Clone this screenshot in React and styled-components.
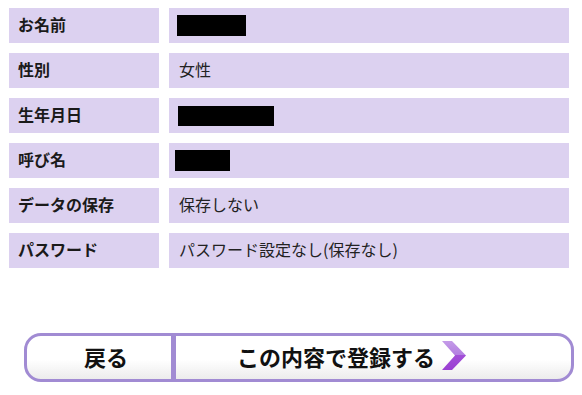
import styled, { createGlobalStyle } from 'styled-components'

const GlobalStyle = createGlobalStyle`
  body {
    margin: 0;
    background: #fff;
    font-family: "Noto Sans CJK JP", "Noto Sans", sans-serif;
    color: #222;
  }
`

const Page = styled.div`
  padding: 8px 9px;
`

const InfoList = styled.dl`
  margin: 0;
  width: 560px;
  display: grid;
  grid-template-columns: 150px 400px;
  column-gap: 10px;
  row-gap: 10px;
`

const Label = styled.dt`
  height: 35px;
  box-sizing: border-box;
  padding: 0 0 3px 9px;
  background: #dcd1f0;
  display: flex;
  align-items: center;
  font-size: 16px;
  font-weight: 700;
  color: #1a1a1a;
`

const Value = styled.dd`
  margin: 0;
  height: 35px;
  box-sizing: border-box;
  padding: 0 0 3px 10px;
  background: #dcd1f0;
  display: flex;
  align-items: center;
  font-size: 16px;
  color: #222;
`

const Masked = styled.span`
  display: block;
  width: ${(p) => p.$w}px;
  height: ${(p) => p.$h}px;
  background: #000;
  margin: ${(p) => p.$y || 0}px 0 0 ${(p) => p.$x || 0}px;
`

const ButtonBar = styled.div`
  margin: 65px 0 0 15px;
  width: 550px;
  height: 49px;
  box-sizing: border-box;
  border: 3px solid #a18bd3;
  border-radius: 17px;
  background: linear-gradient(#fff 0%, #fff 55%, #ececec 100%);
  display: flex;
  overflow: hidden;
`

const BarButton = styled.button`
  border: none;
  background: transparent;
  font-family: inherit;
  font-size: 22px;
  font-weight: 700;
  color: #111;
  display: flex;
  align-items: center;
  gap: 7px;
  padding: 0 0 4px ${(p) => p.$pad}px;
  width: ${(p) => p.$w}px;
  cursor: pointer;
`

const Divider = styled.span`
  width: 5px;
  background: #a18bd3;
`

const rows = [
  { label: 'お名前', mask: { w: 69, h: 21, x: -2, y: 3 } },
  { label: '性別', text: '女性' },
  { label: '生年月日', mask: { w: 96, h: 20, x: -1, y: 3 } },
  { label: '呼び名', mask: { w: 55, h: 21, x: -4, y: 3 } },
  { label: 'データの保存', text: '保存しない' },
  { label: 'パスワード', text: 'パスワード設定なし(保存なし)' },
]

function Chevron() {
  return (
    <svg width='24' height='29' viewBox='0 0 24 29'>
      <defs>
        <linearGradient id='chev' x1='0' y1='0' x2='0' y2='1'>
          <stop offset='0' stopColor='#c49be8' />
          <stop offset='0.5' stopColor='#b27ee0' />
          <stop offset='0.5' stopColor='#a24fd8' />
          <stop offset='1' stopColor='#9a3fd2' />
        </linearGradient>
      </defs>
      <polygon points='0,0 10,0 24,14.5 10,29 0,29 13,14.5' fill='url(#chev)' />
    </svg>
  )
}

export default function App() {
  return (
    <Page>
      <GlobalStyle />
      <InfoList>
        {rows.map((r) => (
          <Row key={r.label} row={r} />
        ))}
      </InfoList>
      <ButtonBar>
        <BarButton $w={144} $pad={57}>戻る</BarButton>
        <Divider />
        <BarButton $w={395} $pad={61}>
          この内容で登録する
          <Chevron />
        </BarButton>
      </ButtonBar>
    </Page>
  )
}

function Row({ row }) {
  return (
    <>
      <Label>{row.label}</Label>
      <Value>
        {row.mask ? (
          <Masked $w={row.mask.w} $h={row.mask.h} $x={row.mask.x} $y={row.mask.y} />
        ) : (
          row.text
        )}
      </Value>
    </>
  )
}
